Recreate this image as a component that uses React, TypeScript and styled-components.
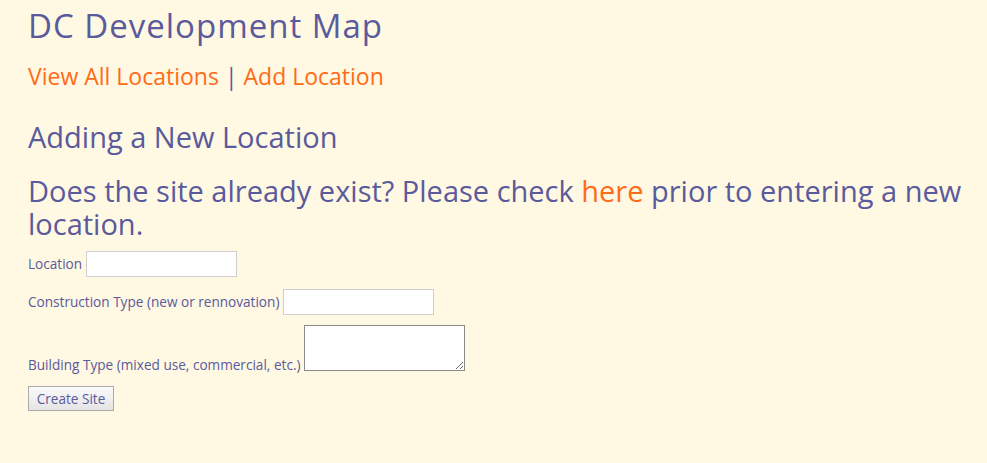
import React from "react";
import styled, { createGlobalStyle } from "styled-components";

const purple = "#5a5a9c";
const orange = "#ff6b17";

const GlobalStyle = createGlobalStyle`
  html, body {
    margin: 0;
    padding: 0;
    background: #fff8e2;
  }
  body {
    font-family: "Open Sans", "Noto Sans", sans-serif;
    color: ${purple};
  }
`;

const Page = styled.div`
  padding: 6px 14px 40px 28px;
  width: 945px;
  box-sizing: content-box;
`;

const Title = styled.h1`
  margin: 0;
  font-size: 33px;
  letter-spacing: 1px;
  line-height: 40px;
  font-weight: 400;
  color: ${purple};
`;

const Nav = styled.nav`
  margin-top: 16px;
  font-size: 23px;
  line-height: 28px;
  color: ${purple};
`;

const NavLink = styled.a`
  color: ${orange};
  text-decoration: none;
`;

const Heading = styled.h2`
  margin: 30px 0 0;
  font-size: 29px;
  line-height: 34px;
  font-weight: 400;
`;

const Question = styled.h3`
  margin: 20px 0 0;
  font-size: 29px;
  line-height: 33px;
  font-weight: 400;
`;

const Form = styled.form`
  margin-top: 11px;
  display: flex;
  flex-direction: column;
  align-items: flex-start;
`;

const Row = styled.div<{ $end?: boolean; $space: number }>`
  display: flex;
  align-items: ${(p) => (p.$end ? "flex-end" : "center")};
  gap: 4px;
  margin-bottom: ${(p) => p.$space}px;
`;

const Label = styled.label<{ $tight?: boolean }>`
  font-size: 13.6px;
  line-height: ${(p) => (p.$tight ? "12px" : "18px")};
  color: ${purple};
`;

const TextInput = styled.input`
  box-sizing: border-box;
  width: 151px;
  height: 26px;
  margin: 0;
  padding: 2px 4px;
  border: 1px solid #cfcfcf;
  background: #fff;
  font-size: 13px;
  outline: none;
`;

const TextArea = styled.textarea`
  box-sizing: border-box;
  width: 161px;
  height: 46px;
  margin: 0;
  padding: 2px;
  border: 1px solid #8a8a8a;
  background: #fff;
  font-size: 13px;
  outline: none;
`;

const Button = styled.button`
  box-sizing: border-box;
  height: 25px;
  width: 86px;
  padding: 0 4px;
  border: 1px solid #ababab;
  background: linear-gradient(#fbfbfb, #e4e4e4);
  font-family: inherit;
  font-size: 13.6px;
  color: ${purple};
`;

export default function App() {
  return (
    <>
      <GlobalStyle />
      <Page>
        <Title>DC Development Map</Title>
        <Nav>
          <NavLink href="#">View All Locations</NavLink> | <NavLink href="#">Add Location</NavLink>
        </Nav>
        <Heading>Adding a New Location</Heading>
        <Question>
          Does the site already exist? Please check <NavLink href="#">here</NavLink> prior to entering a new
          location.
        </Question>
        <Form onSubmit={(e) => e.preventDefault()}>
          <Row $space={12}>
            <Label htmlFor="loc">Location</Label>
            <TextInput id="loc" type="text" />
          </Row>
          <Row $space={10}>
            <Label htmlFor="ctype">Construction Type (new or rennovation)</Label>
            <TextInput id="ctype" type="text" />
          </Row>
          <Row $end $space={15}>
            <Label htmlFor="btype" $tight>
              Building Type (mixed use, commercial, etc.)
            </Label>
            <TextArea id="btype" />
          </Row>
          <Button type="submit">Create Site</Button>
        </Form>
      </Page>
    </>
  );
}
